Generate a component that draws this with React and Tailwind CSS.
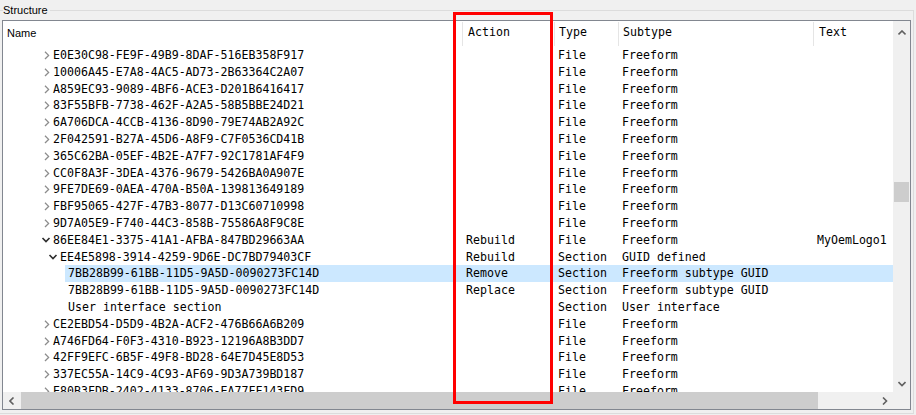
import React from 'react';

const rows = [
    { lvl: 1, exp: false, name: 'E0E30C98-FE9F-49B9-8DAF-516EB358F917', type: 'File', sub: 'Freeform' },
    { lvl: 1, exp: false, name: '10006A45-E7A8-4AC5-AD73-2B63364C2A07', type: 'File', sub: 'Freeform' },
    { lvl: 1, exp: false, name: 'A859EC93-9089-4BF6-ACE3-D201B6416417', type: 'File', sub: 'Freeform' },
    { lvl: 1, exp: false, name: '83F55BFB-7738-462F-A2A5-58B5BBE24D21', type: 'File', sub: 'Freeform' },
    { lvl: 1, exp: false, name: '6A706DCA-4CCB-4136-8D90-79E74AB2A92C', type: 'File', sub: 'Freeform' },
    { lvl: 1, exp: false, name: '2F042591-B27A-45D6-A8F9-C7F0536CD41B', type: 'File', sub: 'Freeform' },
    { lvl: 1, exp: false, name: '365C62BA-05EF-4B2E-A7F7-92C1781AF4F9', type: 'File', sub: 'Freeform' },
    { lvl: 1, exp: false, name: 'CC0F8A3F-3DEA-4376-9679-5426BA0A907E', type: 'File', sub: 'Freeform' },
    { lvl: 1, exp: false, name: '9FE7DE69-0AEA-470A-B50A-139813649189', type: 'File', sub: 'Freeform' },
    { lvl: 1, exp: false, name: 'FBF95065-427F-47B3-8077-D13C60710998', type: 'File', sub: 'Freeform' },
    { lvl: 1, exp: false, name: '9D7A05E9-F740-44C3-858B-75586A8F9C8E', type: 'File', sub: 'Freeform' },
    { lvl: 1, exp: true, name: '86EE84E1-3375-41A1-AFBA-847BD29663AA', action: 'Rebuild', type: 'File', sub: 'Freeform', text: 'MyOemLogo1' },
    { lvl: 2, exp: true, name: 'EE4E5898-3914-4259-9D6E-DC7BD79403CF', action: 'Rebuild', type: 'Section', sub: 'GUID defined' },
    { lvl: 3, name: '7BB28B99-61BB-11D5-9A5D-0090273FC14D', action: 'Remove', type: 'Section', sub: 'Freeform subtype GUID', selected: true },
    { lvl: 3, name: '7BB28B99-61BB-11D5-9A5D-0090273FC14D', action: 'Replace', type: 'Section', sub: 'Freeform subtype GUID' },
    { lvl: 3, name: 'User interface section', type: 'Section', sub: 'User interface' },
    { lvl: 1, exp: false, name: 'CE2EBD54-D5D9-4B2A-ACF2-476B66A6B209', type: 'File', sub: 'Freeform' },
    { lvl: 1, exp: false, name: 'A746FD64-F0F3-4310-B923-12196A8B3DD7', type: 'File', sub: 'Freeform' },
    { lvl: 1, exp: false, name: '42FF9EFC-6B5F-49F8-BD28-64E7D45E8D53', type: 'File', sub: 'Freeform' },
    { lvl: 1, exp: false, name: '337EC55A-14C9-4C93-AF69-9D3A739BD187', type: 'File', sub: 'Freeform' },
    { lvl: 1, exp: false, name: 'E80B3FDB-2402-4133-8706-EA77FF143FD9', type: 'File', sub: 'Freeform' },
];

const indent = { 1: 'w-[39px]', 2: 'w-[46px]', 3: 'w-[54px]' };

const Chevron = ({ exp }) => {
    if (exp === undefined) return null;
    return exp ? (
        <svg width="8" height="17" viewBox="0 0 8 17" className="overflow-visible">
            <polyline points="0.5,6 4,9.6 7.5,6" fill="none" stroke="#2e2e2e" strokeWidth="1.6" />
        </svg>
    ) : (
        <svg width="8" height="17" viewBox="0 0 8 17">
            <polyline points="3,4.8 6.6,8.4 3,12" fill="none" stroke="#8c8c8c" strokeWidth="1.3" />
        </svg>
    );
};

const Arrow = ({ dir }) => {
    const pts = {
        up: '0.5,4.5 4,1 7.5,4.5',
        down: '0.5,1 4,4.5 7.5,1',
        left: '4.5,0.5 1,4 4.5,7.5',
        right: '1,0.5 4.5,4 1,7.5',
    }[dir];
    const vert = dir === 'up' || dir === 'down';
    return (
        <svg width={vert ? 8 : 6} height={vert ? 6 : 8} viewBox={vert ? '0 0 8 6' : '0 0 6 8'}>
            <polyline points={pts} fill="none" stroke="#606060" strokeWidth="1.6" />
        </svg>
    );
};

const HeaderCell = ({ label, className, sans }) => (
    <div className={`flex items-center justify-between h-full ${className}`}>
        <span className={`pb-[2px] ${sans ? 'font-["Liberation_Sans",sans-serif] text-[11px]' : ''}`}>{label}</span>
        <div className="w-px h-[24px] bg-[#e5e5e5]" />
    </div>
);

export default function App() {
    return (
        <div className='relative w-[916px] h-[415px] bg-[#f0f0f0] overflow-hidden text-black font-["DejaVu_Sans_Mono",monospace] text-[11.6px]'>
            <div className="h-full pt-[10px] pr-[2px] pb-[1px]">
                <div className="relative h-full border-t border-r border-b border-[#dcdcdc] pt-[9px] pl-[2px] pr-[2px] pb-[3px]">
                    <span className='absolute top-[-8px] left-[3px] bg-[#f0f0f0] pr-[2px] font-["Liberation_Sans",sans-serif] text-[11px] leading-[14px]'>
                        Structure
                    </span>

                    {/* list view */}
                    <div className="h-full border border-[#828790] bg-white flex flex-col">
                        <div className="flex-1 flex min-h-0">
                            <div className="flex-1 flex flex-col min-w-0 overflow-hidden">
                                <div className="h-[26px] flex shrink-0">
                                    <HeaderCell label="Name" sans className="w-[460px] pl-[4px]" />
                                    <HeaderCell label="Action" className="w-[92px] pl-[5px]" />
                                    <HeaderCell label="Type" className="w-[64px] pl-[4px]" />
                                    <HeaderCell label="Subtype" className="w-[195px] pl-[4px]" />
                                    <div className="flex-1 flex items-center pl-[5px] pb-[2px]">Text</div>
                                </div>
                                <div className="flex-1 overflow-hidden">
                                    {rows.map((r, i) => (
                                        <div key={i} className="flex h-[16.8px] leading-[16.8px] whitespace-nowrap">
                                            <div className={`${indent[r.lvl]} shrink-0`} />
                                            <div className="w-[8px] shrink-0 flex items-start">
                                                <Chevron exp={r.exp} />
                                            </div>
                                            <div className={`flex-1 flex min-w-0 ${r.selected ? 'bg-[#cce8ff]' : ''}`}>
                                                <div className="flex-1 pl-[3px] min-w-0">{r.name}</div>
                                                <div className="w-[92px] pl-[3px]">{r.action}</div>
                                                <div className="w-[64px] pl-[3px]">{r.type}</div>
                                                <div className="w-[195px] pl-[3px]">{r.sub}</div>
                                                <div className="w-[79px] pl-[3px]">{r.text}</div>
                                            </div>
                                        </div>
                                    ))}
                                </div>
                            </div>

                            {/* vertical scrollbar */}
                            <div className="w-[17px] shrink-0 bg-[#f0f0f0] flex flex-col">
                                <div className="h-[17px] flex items-center justify-center pt-[6px]">
                                    <Arrow dir="up" />
                                </div>
                                <div className="flex-1">
                                    <div className="mt-[144px] ml-[1px] w-[15px] h-[20px] bg-[#cdcdcd]" />
                                </div>
                                <div className="h-[17px] flex items-center justify-center">
                                    <Arrow dir="down" />
                                </div>
                            </div>
                        </div>

                        {/* horizontal scrollbar */}
                        <div className="h-[17px] shrink-0 flex bg-[#f0f0f0]">
                            <div className="w-[17px] flex items-center justify-center">
                                <Arrow dir="left" />
                            </div>
                            <div className="flex-1 flex items-stretch">
                                <div className="ml-[1px] w-[797px] bg-[#cdcdcd]" />
                            </div>
                            <div className="w-[17px] flex items-center justify-center">
                                <Arrow dir="right" />
                            </div>
                            <div className="w-[17px]" />
                        </div>
                    </div>
                </div>
            </div>

            {/* red annotation box */}
            <div className="absolute left-[453px] top-[12px] w-[100px] h-[392px] border-[3px] border-[#ff0000]" />
        </div>
    );
}
